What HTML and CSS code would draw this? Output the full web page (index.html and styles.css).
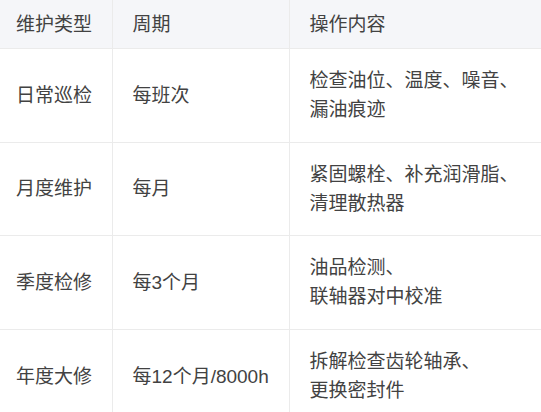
FILE: index.html
```html
<!DOCTYPE html>
<html lang="zh">
<head>
<meta charset="utf-8">
<link rel="stylesheet" href="styles.css">
</head>
<body>
<table class="maint">
  <colgroup>
    <col class="c1">
    <col class="c2">
    <col class="c3">
  </colgroup>
  <thead>
    <tr><th>维护类型</th><th>周期</th><th>操作内容</th></tr>
  </thead>
  <tbody>
    <tr><td>日常巡检</td><td>每班次</td><td>检查油位、温度、噪音、<br>漏油痕迹</td></tr>
    <tr><td>月度维护</td><td>每月</td><td>紧固螺栓、补充润滑脂、<br>清理散热器</td></tr>
    <tr><td>季度检修</td><td>每3个月</td><td>油品检测、<br>联轴器对中校准</td></tr>
    <tr><td>年度大修</td><td>每12个月/8000h</td><td>拆解检查齿轮轴承、<br>更换密封件</td></tr>
  </tbody>
</table>
</body>
</html>
```
FILE: styles.css
```css
html, body {
  margin: 0;
  padding: 0;
  background: #ffffff;
}
body {
  font-family: "Liberation Sans", "Noto Sans CJK SC", sans-serif;
  font-size: 19px;
  font-weight: 400;
  color: #424242;
  overflow: hidden;
}
.maint {
  border-collapse: collapse;
  width: 100%;
  table-layout: fixed;
}
.c1 { width: 112px; }
.c2 { width: 177px; }
.maint th,
.maint td {
  text-align: left;
  vertical-align: middle;
  line-height: 29px;
  border-right: 1px solid #ebebeb;
  border-bottom: 1px solid #ebebeb;
  padding: 17.3px 20px;
  white-space: nowrap;
}
.maint th:last-child,
.maint td:last-child {
  border-right: none;
}
.maint th {
  font-weight: 400;
  background: #f5f6f9;
  padding-top: 9.5px;
  padding-bottom: 9.5px;
}
.maint th:first-child,
.maint td:first-child {
  padding-left: 16px;
}
```
